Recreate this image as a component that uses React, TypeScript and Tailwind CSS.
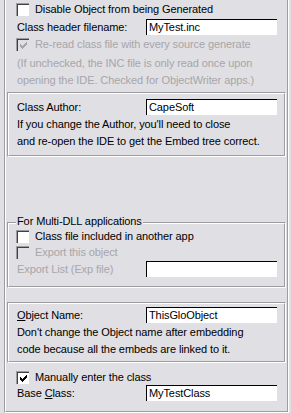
import React from 'react';

const CHECK = [
  '......X',
  '.....XX',
  'X...XXX',
  'XX.XXX.',
  'XXXXX..',
  '.XXX...',
  '..X....',
];

const CheckBox = ({ checked = false, disabled = false }: { checked?: boolean; disabled?: boolean }) => (
  <span className="flex h-[13px] w-[13px] shrink-0 border-t border-l border-[#9d9da1] border-r-white border-b-white">
    <span
      className={`flex flex-1 items-center justify-center border-t border-l border-[#404040] border-r-[#e0dfe3] border-b-[#e0dfe3] ${
        disabled ? 'bg-[#e0dfe3]' : 'bg-white'
      }`}
    >
      {checked && (
        <svg width="7" height="7" viewBox="0 0 7 7" shapeRendering="crispEdges">
          {CHECK.map((row, y) =>
            row.split('').map((c, x) =>
              c === 'X' ? (
                <rect key={`${x}-${y}`} x={x} y={y} width="1" height="1" fill={disabled ? '#a7a6aa' : '#000'} />
              ) : null
            )
          )}
        </svg>
      )}
    </span>
  </span>
);

const Input = ({ value = '' }: { value?: string }) => (
  <div className="flex h-[16px] w-[131px] shrink-0 items-center border-t border-l border-black border-r-white border-b-white bg-white pl-[2px] leading-none">
    {value}
  </div>
);

const Group = ({ className = '', children }: { className?: string; children: React.ReactNode }) => (
  <div className={`mx-[1px] border border-[#9d9da1] border-r-white border-b-white ${className}`}>
    <div className="border border-white border-r-[#9d9da1] border-b-[#9d9da1]">{children}</div>
  </div>
);

const Line = ({ children, gray = false }: { children: React.ReactNode; gray?: boolean }) => (
  <div className={`flex h-[17px] items-center whitespace-nowrap ${gray ? 'text-[#a7a6aa]' : ''}`}>{children}</div>
);

export default function App() {
  return (
    <div
      className="h-[413px] w-[291px] overflow-hidden bg-[#e0dfe3] text-[11px] tracking-[-0.1px] text-black"
      style={{ fontFamily: '"Liberation Sans", Arial, sans-serif' }}
    >
      <div className="ml-[4px] h-[413px] w-[285px] border-l border-b border-r border-[#9d9da1] border-r-white border-b-white">
        <div className="flex h-full flex-col border-l border-b border-r border-white border-r-[#9d9da1] border-b-[#9d9da1]">
          {/* top options */}
          <div className="flex flex-col pl-[10px] pt-[3px]">
            <label className="flex h-[13px] items-center gap-[6px]">
              <CheckBox />
              <span>Disable Object from being Generated</span>
            </label>
            <div className="mt-[3px] flex items-center pl-[1px]">
              <span className="w-[129px]">Class header filename:</span>
              <Input value="MyTest.inc" />
            </div>
            <label className="mt-[2px] flex h-[13px] items-center gap-[6px] text-[#a7a6aa]">
              <CheckBox checked disabled />
              <span>Re-read class file with every source generate</span>
            </label>
            <div className="mt-[4px] pl-[1px]">
              <Line gray>(If unchecked, the INC file is only read once upon</Line>
              <Line gray>opening the IDE. Checked for ObjectWriter apps.)</Line>
            </div>
          </div>

          {/* author */}
          <Group className="mt-[3px]">
            <div className="pb-[5px] pl-[8px] pt-[5px]">
              <div className="flex items-center">
                <span className="w-[129px]">Class Author:</span>
                <Input value="CapeSoft" />
              </div>
              <div className="mt-[1px]">
                <Line>If you change the Author, you'll need to close</Line>
                <Line>and re-open the IDE to get the Embed tree correct.</Line>
              </div>
            </div>
          </Group>

          {/* multi-dll */}
          <Group className="mt-[65px]">
            <div className="pb-[8px] pl-[7px]">
              <div className="-mt-[9px] flex h-[13px] items-center">
                <span className="bg-[#e0dfe3] pl-[1px] pr-[1px]">For Multi-DLL applications</span>
              </div>
              <label className="mt-[2px] flex h-[13px] items-center gap-[6px]">
                <CheckBox />
                <span>Class file included in another app</span>
              </label>
              <label className="mt-[3px] flex h-[13px] items-center gap-[6px] text-[#a7a6aa]">
                <CheckBox disabled />
                <span>Export this object</span>
              </label>
              <div className="mt-[2px] flex items-center pl-[1px]">
                <span className="w-[129px] text-[#a7a6aa]">Export List (Exp file)</span>
                <Input />
              </div>
            </div>
          </Group>

          {/* object name */}
          <Group className="mt-[14px]">
            <div className="pb-[3px] pl-[8px] pt-[3px]">
              <div className="flex items-center">
                <span className="w-[129px]">
                  <span className="underline">O</span>bject Name:
                </span>
                <Input value="ThisGloObject" />
              </div>
              <div className="mt-[1px]">
                <Line>Don't change the Object name after embedding</Line>
                <Line>code because all the embeds are linked to it.</Line>
              </div>
            </div>
          </Group>

          {/* base class */}
          <div className="flex flex-col pl-[10px] pt-[8px]">
            <label className="flex h-[13px] items-center gap-[6px]">
              <CheckBox checked />
              <span>Manually enter the class</span>
            </label>
            <div className="mt-[1px] flex items-center pl-[1px]">
              <span className="w-[129px]">
                Base <span className="underline">C</span>lass:
              </span>
              <Input value="MyTestClass" />
            </div>
          </div>
        </div>
      </div>
    </div>
  );
}
